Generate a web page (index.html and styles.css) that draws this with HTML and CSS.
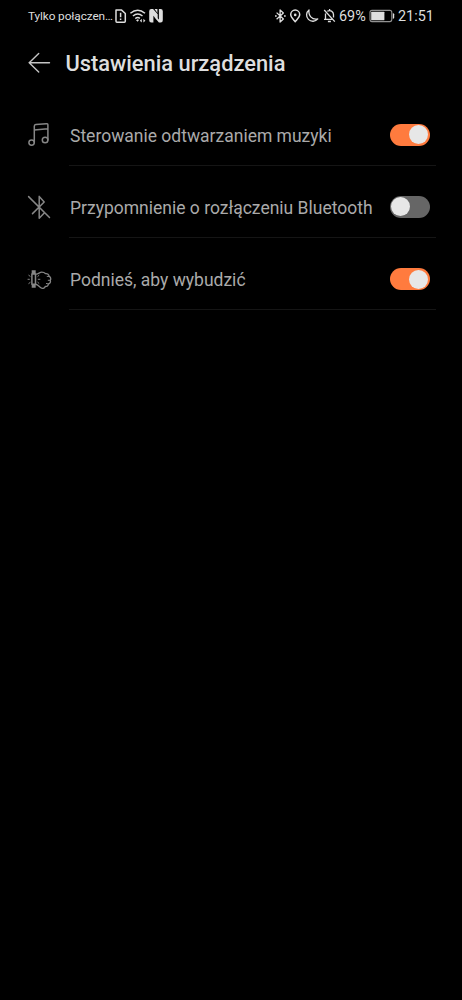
FILE: index.html
```html
<!DOCTYPE html>
<html lang="pl">
<head>
<meta charset="utf-8">
<title>Ustawienia urządzenia</title>
<link rel="stylesheet" href="styles.css">
</head>
<body>
<header class="status">
  <div class="status-left">
    <span class="carrier">Tylko połączen…</span>
    <svg class="sim" width="50" height="16" viewBox="115 8 50 16">
      <path class="line wide" d="M116 10.1h5.6l3.7 3.4v7.8q0 .9-.9.9h-7.5q-.9 0-.9-.9z"/>
      <path class="line wide" d="M120.6 12.8v4.4M120.6 18.5v1.6"/>
      <path class="line wide" d="M130.4 13.3q7.3-6.2 14.6 0M132.9 16q4.8-4 9.6 0M135.3 18.6q2.4-1.9 4.6-.2"/>
      <path class="fill" d="M136 20.2l1.8-1 1.2.8-1.3 1.8zM139.8 20.7l2-1.9v3.8zM145.4 20.7l-2-1.9v3.8z"/>
      <path class="fill" d="M151.3 9h1.8l4.6 5.2v6.4l-4.3-4.9v6.7h-2.1q-2.1 0-2.1-2.2v-9q0-2.2 2.1-2.2z"/>
      <path class="fill" d="M160.7 22.4h-1.8l-4.2-4.9v-1.7l4.2 3.8V9h1.8q2.1 0 2.1 2.2v9q0 2.2-2.1 2.2zM154.6 9h2.8v4.1z"/>
    </svg>
  </div>
  <div class="status-right">
    <svg width="62" height="16" viewBox="274 8 62 16">
      <path class="line" d="M276.6 12.6l6.8 6.4-3.3 3V10l3.3 2.9-6.8 6.3"/>
      <path class="fill" d="M275 15.2h1.7v1.6H275zM284 15.2h1.7v1.6H284z"/>
      <path class="line wide" d="M295.2 21.7c-2-2.4-4.5-4.5-4.5-7.1a4.5 4.5 0 0 1 9 0c0 2.6-2.5 4.7-4.5 7.1z"/>
      <circle class="fill" cx="295.2" cy="14.9" r="1.3"/>
      <path class="line" d="M309 10a6.3 6.3 0 1 0 8.8 8.9c-5.6 1.2-9.6-3-8.8-8.9z"/>
      <path class="line" d="M324.2 10l10.6 11.6M324 19.3h9M325.5 19v-5.6M327.3 11.3c3-1.8 6.2.2 6.2 3.3v3M329.6 9v1.3M327.9 21.5h3"/>
    </svg>
    <span class="percent">69%</span>
    <svg class="battery" width="27" height="14" viewBox="369 9 27 14">
      <rect class="shell" x="370" y="10.4" width="21.8" height="11.2" rx="2"/>
      <rect class="fill" x="371.2" y="11.8" width="13.2" height="8.4" rx=".5"/>
      <path class="fill" d="M392.8 13.2q1.4 0 1.4 1v3.6q0 1-1.4 1z"/>
    </svg>
    <time class="clock">21:51</time>
  </div>
</header>
<div class="titlebar">
  <svg class="back" width="24" height="24" viewBox="27 51 24 24"><path d="M49.5 62.7H29.2M38.7 53.4L29.2 62.7l9.5 9.2"/></svg>
  <h1>Ustawienia urządzenia</h1>
</div>
<main class="list">
  <div class="row">
    <svg class="icon" width="26" height="26" viewBox="27 122 26 26">
      <path d="M34.3 142.3V126.2q0-1.5 1.5-1.7l10.6-.8q1.5-.1 1.5 1.2v15M34.3 129.9l13.4-1.2"/>
      <ellipse cx="31.6" cy="142.6" rx="2.7" ry="2.7"/><ellipse cx="45.1" cy="140" rx="2.8" ry="2.8"/>
    </svg>
    <div class="body"><span class="label">Sterowanie odtwarzaniem muzyki</span><span class="switch on"></span></div>
  </div>
  <div class="row">
    <svg class="icon" width="26" height="26" viewBox="27 194 26 26">
      <path d="M28.6 196.6L49.5 217.5M32.5 213.6l11.7-11.6-5-5.6v21.8l5.3-5.4"/>
    </svg>
    <div class="body"><span class="label">Przypomnienie o rozłączeniu Bluetooth</span><span class="switch"></span></div>
  </div>
  <div class="row">
    <svg class="icon" width="26" height="26" viewBox="27 266.5 26 26">
      <path class="fist" d="M36.4 273.6c2.2-.3 3.4-1.9 5.4-1.9 1.7 0 3 .7 3.9 1.5 1.8-.2 3.4 1 3.4 2.7 1.7.7 2.1 2.5 1.2 3.8.6 1.8-.3 3.5-1.9 3.8-.2 1.8-1.5 2.7-3 2.4-1 2-3 2.5-4.6 1.4-1.4-1-2.8-3-4.4-3.3"/>
      <path class="thin" d="M47.2 275.9h1.9M48.2 279.8h2M46.4 283l2 .5M28 278.8h1.4M28.8 274.8l1.3 1M28.8 283l1.3-1M38.2 278.8h1.7M37.8 275.9l1.1-1M37.8 281.8l1.1 1"/>
      <rect x="31.9" y="273.5" width="3.6" height="10.2"/>
      <path class="strap" d="M33.7 269.8v3.6M33.7 283.8v3.4"/>
    </svg>
    <div class="body"><span class="label">Podnieś, aby wybudzić</span><span class="switch on"></span></div>
  </div>
</main>
</body>
</html>
```
FILE: styles.css
```css
* { box-sizing: border-box; }
body {
  margin: 0;
  min-height: 1000px;
  background: #000;
  color: #dedede;
  font-family: Roboto, "Noto Sans", sans-serif;
}
svg { display: block; flex: none; }
.status {
  display: flex;
  justify-content: space-between;
  height: 32px;
  padding: 0 28px;
}
.status-left, .status-right { display: flex; align-items: center; }
.carrier { width: 87px; font-size: 11.8px; white-space: nowrap; letter-spacing: -.1px; }
.percent { width: 30px; margin-left: 3px; font-size: 14.4px; }
.clock { width: 36px; font-size: 14.4px; white-space: nowrap; }
.battery { margin-right: 2px; }
.line { fill: none; stroke: #dedede; stroke-width: 1.3; stroke-linejoin: round; }
.wide { stroke-width: 1.5; }
.fill { fill: #dedede; }
.shell { fill: none; stroke: #929292; stroke-width: 1.1; }
.titlebar {
  display: flex;
  align-items: center;
  height: 62px;
  padding-left: 27px;
}
.back { fill: none; stroke: #c5c5c5; stroke-width: 1.4; stroke-linecap: round; }
h1 { margin: 2px 0 0 14.5px; font-size: 21.85px; line-height: 30px; font-weight: 500; white-space: nowrap; }
.list { padding: 5px 26px 0 27px; }
.row {
  display: flex;
  align-items: center;
  height: 72.3px;
}
.icon { fill: none; stroke: #868686; stroke-width: 1.5; stroke-linecap: round; stroke-linejoin: round; }
.fist { stroke-width: 1.3; }
.thin { stroke-width: 1; }
.strap { stroke-width: 4; stroke-linecap: butt; }
.body {
  display: flex;
  flex: 1;
  align-items: center;
  justify-content: space-between;
  height: 61px;
  margin-left: 16px;
  padding: 0 6px 0 1px;
  border-bottom: 1px solid #151515;
}
.label { padding-top: 2px; color: #aaa; font-size: 17.5px; line-height: 24px; white-space: nowrap; }
.switch {
  display: flex;
  align-items: center;
  width: 40px;
  height: 22px;
  padding: 0 1px;
  border-radius: 11px;
  background: #666;
}
.switch::before {
  content: "";
  width: 19px;
  height: 19px;
  border-radius: 50%;
  background: #e7e7e7;
}
.switch.on { padding-right: 2px; justify-content: flex-end; background: #ff7b3e; }
```
